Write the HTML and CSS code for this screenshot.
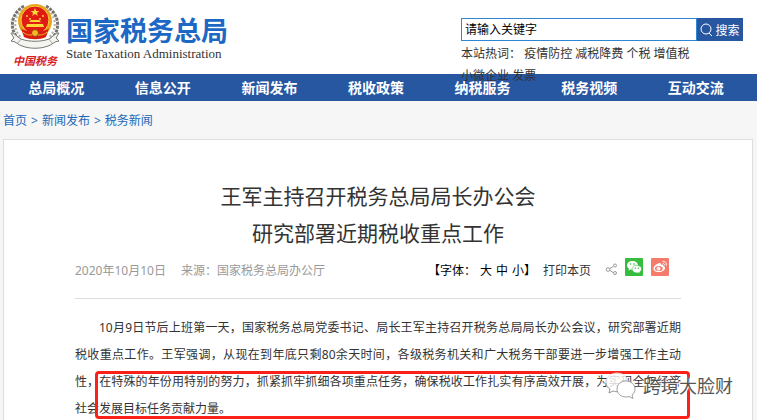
FILE: index.html
```
<!DOCTYPE html>
<html lang="zh-CN">
    <head>
        <meta charset="utf-8">
        <title>国家税务总局</title>
        <link rel="stylesheet" href="styles.css">
    </head>
    <body>
        <header class="header">
            <a class="logo" href="#">
                <div class="emblem">
                    <svg width="50" height="48" viewBox="0 0 50 48">
                        <!-- wheat ears -->
                        <g fill="none" stroke="#77736a" stroke-width="3" stroke-dasharray="3 1">
                            <path d="M14 3C-1 12-1 29 11 38"/>
                            <path d="M36 3c15 9 15 26 3 35"/>
                        </g>
                        <g fill="none" stroke="#b5b2aa" stroke-width="2" stroke-dasharray="2 2">
                            <path d="M12 7C3 15 3 28 12 35"/>
                            <path d="M38 7c9 8 9 21 0 28"/>
                        </g>
                        <!-- national emblem -->
                        <circle cx="25" cy="18" r="17" fill="#e8a51c"/>
                        <circle cx="25" cy="17" r="14" fill="#e01b14" stroke="#f7cf3c"/>
                        <path fill="#ffd83a" d="M25 5l1.200 3h3.200l-2.500 2 1 3-2.900-1.900-2.900 1.900 1-3-2.500-2h3.200z"/>
                        <g fill="#ffd83a">
                            <circle cx="17" cy="13" r="1"/>
                            <circle cx="20" cy="16" r="1"/>
                            <circle cx="30" cy="16" r="1"/>
                            <circle cx="33" cy="13" r="1"/>
                            <path d="M19 19l2-2h8l2 2zM17 21h16l1 3H16z"/>
                        </g>
                        <path fill="#d81c12" d="M11 25c4 5 24 5 28 0l-3 9c-6 3-16 3-22 0z"/>
                        <circle cx="25" cy="30" r="3.500" fill="#f2b827" stroke="#a6370b"/>
                        <path fill="none" stroke="#f2b827" d="M13 29c3 3 6 3 9 3M37 29c-3 3-6 3-9 3"/>
                        <!-- ribbon -->
                        <path fill="#f4f4f1" stroke="#77776f" d="M1 30c4 0 6 4 10 6 8 3 20 3 28 0 4-2 6-6 10-6l-3 5 3 3c-5 0-7 4-11 5-8 3-18 3-26 0-4-1-6-5-11-5l3-3z"/>
                        <path fill="none" stroke="#aaa" d="M11 36l-3 4M39 36l3 4"/>
                    </svg>
                    <span class="emblem-text">中国税务</span>
                </div>
                <div class="logo-text">
                    <span class="logo-cn">国家税务总局</span>
                    <span class="logo-en">State Taxation Administration</span>
                </div>
            </a>
            <div class="search">
                <form class="search-form">
                    <input class="search-input" type="text" aria-label="搜索" placeholder="请输入关键字">
                    <button class="search-button" type="button">
                        <svg width="13" height="14" viewBox="0 0 13 14" fill="none" stroke="#fff">
                            <circle cx="6" cy="6" r="5"/>
                            <path d="M9 10l3 3"/>
                        </svg>
                        搜索
                    </button>
                </form>
                <div class="hot-words">
                    本站热词：
                    <a href="#">疫情防控</a>
                    <a href="#">减税降费</a>
                    <a href="#">个税</a>
                    <a href="#">增值税</a>
                    <a href="#">小微企业</a>
                    <a href="#">发票</a>
                </div>
            </div>
        </header>
        <nav class="navbar">
            <ul class="navbar-items">
                <li><a href="#">总局概况</a></li>
                <li><a href="#">信息公开</a></li>
                <li><a href="#">新闻发布</a></li>
                <li><a href="#">税收政策</a></li>
                <li><a href="#">纳税服务</a></li>
                <li><a href="#">税务视频</a></li>
                <li><a href="#">互动交流</a></li>
            </ul>
        </nav>
        <div class="breadcrumb">
            <a href="#">首页</a>
            <span>&gt;</span>
            <a href="#">新闻发布</a>
            <span>&gt;</span>
            <a href="#">税务新闻</a>
        </div>
        <main class="card">
            <h1 class="title">王军主持召开税务总局局长办公会<br>研究部署近期税收重点工作</h1>
            <div class="meta">
                <div class="meta-info">
                    <span>2020年10月10日</span>
                    <span>来源：国家税务总局办公厅</span>
                </div>
                <div class="meta-tools">
                    <div class="font-size">
                        <span>【字体：</span>
                        <a href="#">大</a>
                        <a href="#">中</a>
                        <span><a href="#">小</a>】</span>
                    </div>
                    <a href="#">打印本页</a>
                </div>
                <div class="share">
                    <svg width="12" height="18" viewBox="0 0 12 18" fill="none" stroke="#999">
                        <path d="M5 10.500l3-2M5 12.500l3 2"/>
                        <circle cx="3" cy="11.500" r="1.800"/>
                        <circle cx="10" cy="7.500" r="1.500"/>
                        <circle cx="10" cy="15" r="1.500"/>
                    </svg>
                    <a href="#" aria-label="微信">
                        <svg width="18" height="18" viewBox="0 0 18 18">
                            <rect width="18" height="18" rx="1" fill="#36bd3f"/>
                            <path fill="#fff" d="M7.500 3C4.400 3 2 4.900 2 7.300c0 1.400.8 2.600 2 3.400L3.500 12.500l2-1c.6.2 1.300.3 2 .3 3.100 0 5.500-2 5.500-4.400S10.600 3 7.500 3z"/>
                            <path fill="#fff" stroke="#36bd3f" stroke-width=".6" d="M11.800 7.300c-2.700 0-4.800 1.700-4.800 3.800s2.100 3.800 4.800 3.800c.6 0 1.100-.1 1.600-.2l1.700.9-.4-1.600c1.200-.7 1.900-1.700 1.900-2.900 0-2.100-2.100-3.800-4.800-3.800z"/>
                            <g fill="#36bd3f">
                                <circle cx="5.500" cy="6" r=".8"/>
                                <circle cx="9" cy="6" r=".8"/>
                                <circle cx="10.300" cy="10.200" r=".7"/>
                                <circle cx="13.300" cy="10.200" r=".7"/>
                            </g>
                        </svg>
                    </a>
                    <a href="#" aria-label="微博">
                        <svg width="18" height="18" viewBox="0 0 18 18">
                            <rect width="18" height="18" rx="1" fill="#f57c6c"/>
                            <path fill="#fff" d="M8 5.200c1-.5 2 0 1.700 1.500 1.800-.7 3.200-.2 2.600 1.400 1 .3 1.700 1 1.700 2 0 2-2.700 4-6 4s-5.500-1.500-5.500-3.700C2.500 8.300 5.500 5.800 8 5.200z"/>
                            <ellipse cx="7.800" cy="10.500" rx="3.900" ry="2.600" fill="#f57c6c"/>
                            <circle cx="7.500" cy="10.700" r="1.900" fill="#fff"/>
                            <circle cx="7" cy="11" r=".6" fill="#f57c6c"/>
                            <path fill="none" stroke="#fff" d="M11.500 3.500c2.600-.6 4.600 1.600 3.700 4.200M11.800 5.500c1.200-.2 2 .7 1.600 1.700"/>
                        </svg>
                    </a>
                </div>
            </div>
            <article class="article">
                <p>10月9日节后上班第一天，国家税务总局党委书记、局长王军主持召开税务总局局长办公会议，研究部署近期税收重点工作。王军强调，从现在到年底只剩80余天时间，各级税务机关和广大税务干部要进一步增强工作主动性，在特殊的年份用特别的努力，抓紧抓牢抓细各项重点任务，确保税收工作扎实有序高效开展，为实现全年经济社会发展目标任务贡献力量。</p>
                <div class="highlight"></div>
                <div class="watermark">
                    <svg width="32" height="28" viewBox="0 0 32 28" fill="#fff" fill-opacity=".8" stroke="#888" stroke-width=".8">
                        <path stroke="#ddd" d="M12 1C6 1 1 5 1 10c0 3 2 5 4 7l-1 4 4-2c1 .4 3 .7 4 .7 6 0 11-4 11-9.500S18 1 12 1z"/>
                        <path fill="none" d="M1 11c0 3 2 5 4 6l-1 4 4-2c1 .4 2 .6 4 .7"/>
                        <path fill-opacity="1" d="M21 9c-5 0-9 3.500-9 8s4 8 9 8c1 0 2-.2 3-.5l4 2-1-3.500c2-1.500 3-3.500 3-6 0-4.500-4-8-9-8z"/>
                    </svg>
                    <span>跨境大脸财</span>
                </div>
            </article>
        </main>
    </body>
</html>
```
FILE: styles.css
```
:root {
    --blue: #2857a2;
    --link: #1c68b8;
    --ft-color: #333;
    --line: #ddd;
}

*, *::before, *::after {
    box-sizing: border-box;
}

body {
    margin: 0;
    background-color: #f6f6f6;
    color: var(--ft-color);
    font-family: "Noto Sans", "Noto Sans CJK SC", sans-serif;
    font-size: 12px;
}

a {
    color: inherit;
    text-decoration: none;
}

svg {
    display: block;
}

/* the hot words run over the navbar */
.header {
    position: relative;
    z-index: 1;
    display: flex;
    justify-content: space-between;
    height: 74px;
    padding: 0 14px 0 10px;
}

.header::before {
    content: "";
    position: absolute;
    inset: 0;
    z-index: -1;
    background-color: #fff;
}

.logo {
    display: flex;
    gap: 6px;
}

.emblem {
    display: flex;
    flex-direction: column;
    align-items: center;
    padding-top: 3px;
}

.emblem-text {
    color: #d8201c;
    font-family: "Noto Sans CJK SC", sans-serif;
    font-size: 11px;
    font-style: italic;
    font-weight: bold;
    line-height: 18px;
}

.logo-text {
    display: flex;
    flex-direction: column;
    padding-top: 15px;
}

.logo-cn {
    color: #1c68c4;
    font-size: 27px;
    font-weight: bold;
    line-height: 32px;
}

.logo-en {
    color: #333;
    font-family: "Liberation Serif", serif;
    font-size: 13px;
    line-height: 14px;
}

.search {
    width: 282px;
    padding-top: 18px;
}

.search-form {
    display: flex;
    height: 23px;
}

.search-input {
    flex: 1;
    min-width: 0;
    padding: 0 3px;
    border: 1px solid #2f86d2;
    background-color: #fff;
    font-family: inherit;
    font-size: 12px;
}

.search-input::placeholder {
    color: #000;
}

.search-button {
    display: flex;
    align-items: center;
    justify-content: center;
    gap: 2px;
    width: 46px;
    padding: 0;
    border: 0;
    background-color: var(--blue);
    color: #fff;
    font-family: inherit;
    font-size: 12px;
}

.hot-words {
    width: 236px;
    padding-top: 2px;
    line-height: 22px;
}

.navbar {
    background-color: var(--blue);
    color: #fff;
}

.navbar-items {
    display: flex;
    margin: 0;
    padding: 0 8px 0 3px;
    list-style: none;
}

.navbar-items li {
    flex: 1;
    text-align: center;
    font-size: 14px;
    font-weight: bold;
    line-height: 27px;
}

.breadcrumb {
    display: flex;
    gap: 4px;
    padding: 2px 0 0 3px;
    color: var(--link);
    line-height: 36px;
}

.card {
    margin: 0 4px 0 3px;
    padding: 38px 71px 0;
    border: 1px solid var(--line);
    border-bottom: 0;
    background-color: #fff;
}

.title {
    margin: 0;
    font-size: 21px;
    font-weight: normal;
    line-height: 37px;
    text-align: center;
}

.meta {
    display: flex;
    align-items: center;
    padding: 6px 12px 14px 0;
    border-bottom: 1px solid var(--line);
    line-height: 26px;
}

.meta-info {
    display: flex;
    flex: 1;
    gap: 15px;
    color: #999;
}

.meta-tools {
    display: flex;
    gap: 7px;
}

.font-size {
    display: flex;
    gap: 4px;
    color: #000;
}

.share {
    display: flex;
    align-self: flex-start;
    gap: 8px;
    margin-left: 14px;
}

.article {
    position: relative;
    padding-top: 15px;
}

.article p {
    margin: 0;
    line-height: 27px;
    text-align: justify;
    text-indent: 2em;
}

.highlight {
    position: absolute;
    top: 72px;
    left: 20px;
    right: -9px;
    height: 48px;
    border: 3px solid #fb2018;
    border-radius: 4px;
}

.watermark {
    position: absolute;
    top: 73px;
    right: -52px;
    display: flex;
    align-items: center;
    gap: 6px;
    color: #555;
    font-size: 18px;
    line-height: 28px;
    text-shadow: 0 0 2px #fff, 1px 1px 0 #fff;
}
```
